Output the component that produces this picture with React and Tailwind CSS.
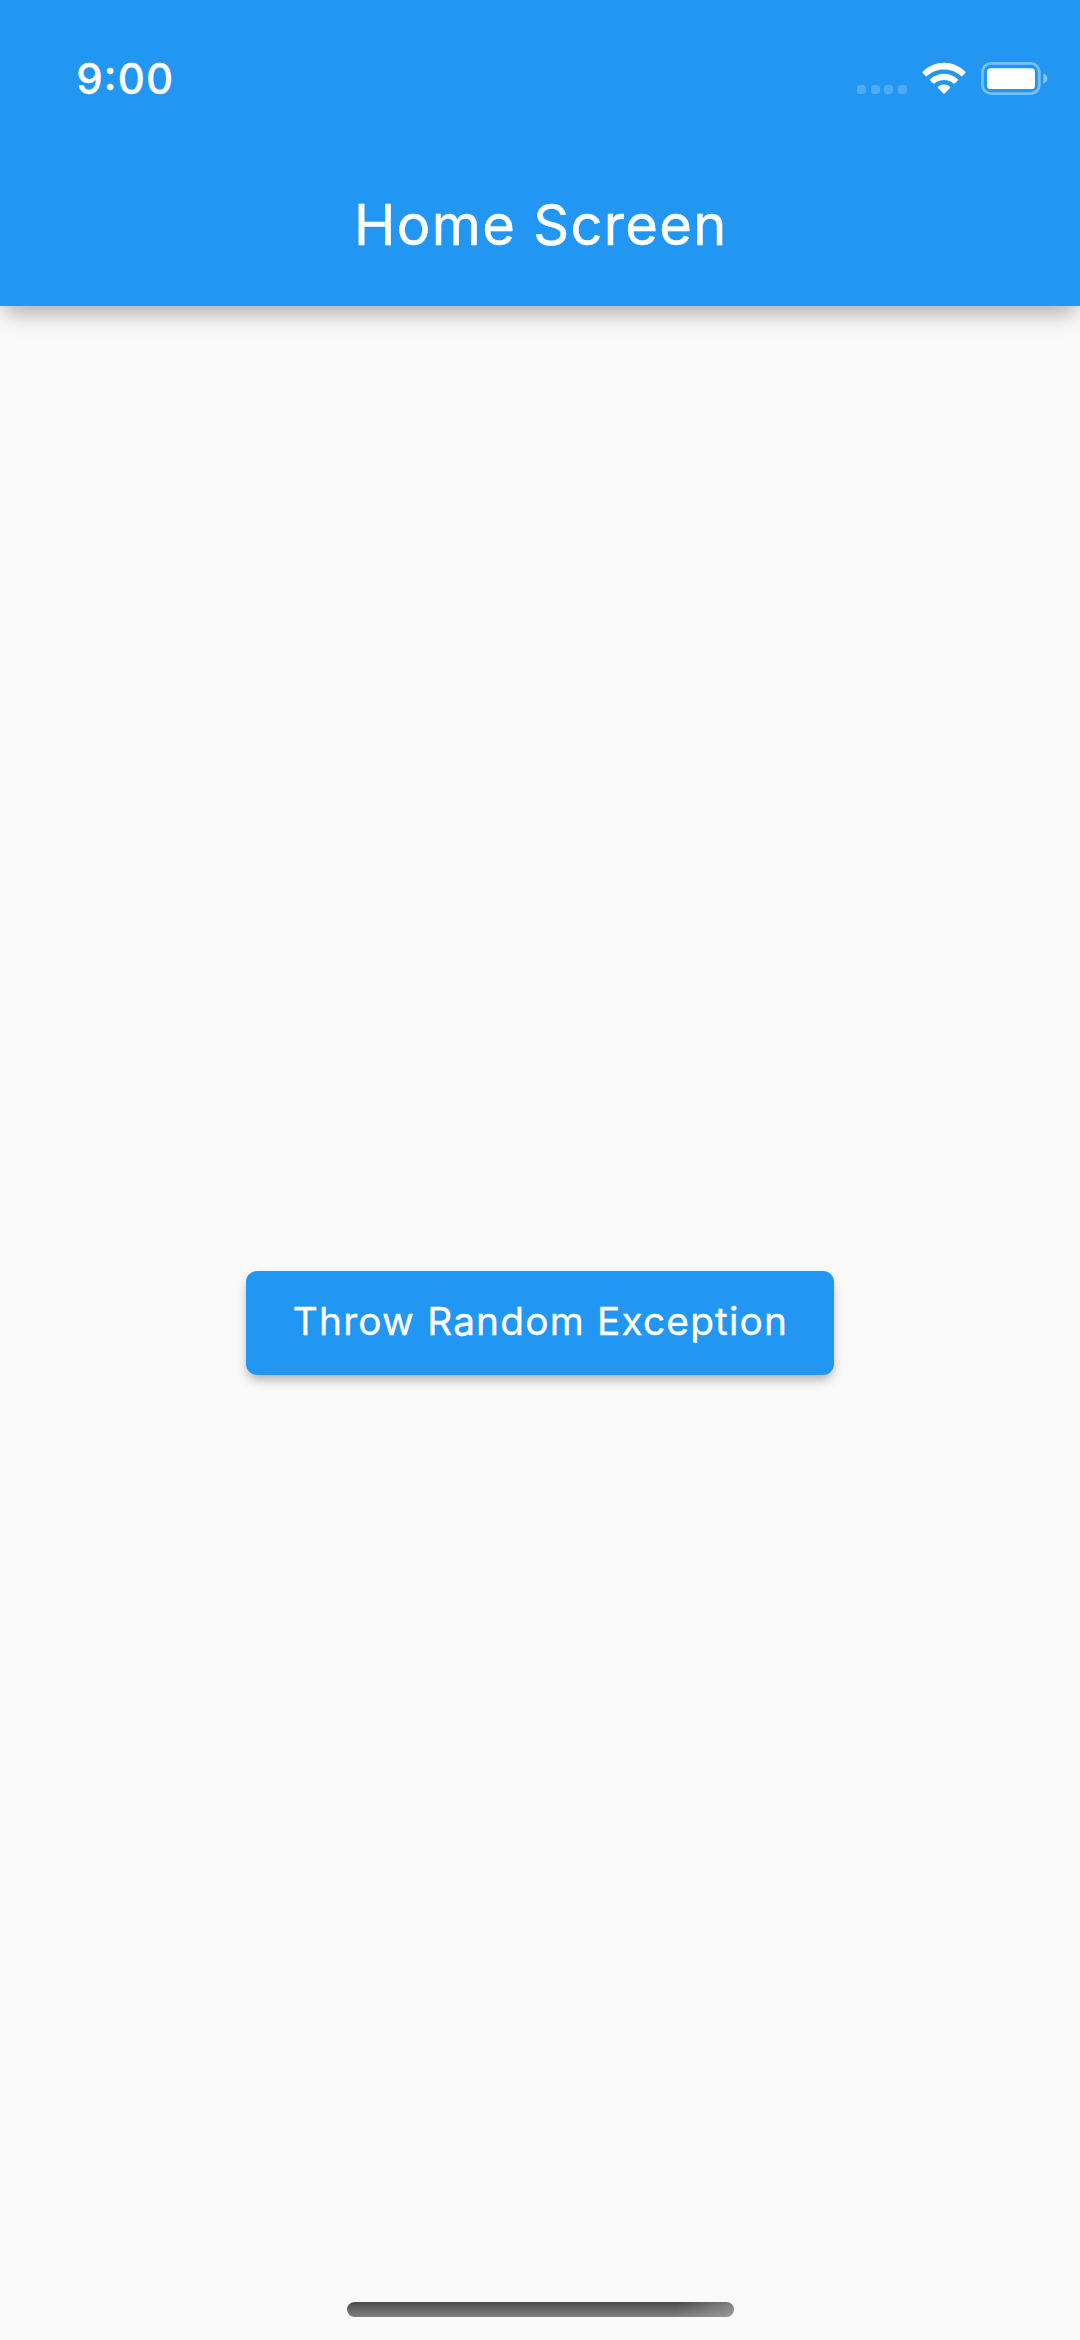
function SignalDots() {
  return (
    <div className="flex gap-[4.6px] pt-[23.5px]">
      {[0, 1, 2, 3].map((i) => (
        <span key={i} className="size-[9px] rounded-[3px] bg-white/20" />
      ))}
    </div>
  );
}

function WifiIcon() {
  return (
    <svg className="h-[34px] w-[44px]" viewBox="0 0 44 34" fill="white">
      <path d="M22 7.4C28.7 7.4 34.8 9.9 39.2 14.1C39.5 14.4 40 14.4 40.3 14.1L43.4 10.9C43.7 10.6 43.7 10.1 43.4 9.8C31.4-2.3 12.6-2.3 .6 9.8C.3 10.1 .3 10.6 .6 10.9L3.7 14.1C4 14.4 4.5 14.4 4.8 14.1C9.2 9.9 15.3 7.4 22 7.4Z" />
      <path d="M22 17.9C25.6 17.9 29 19.2 31.6 21.6C31.9 21.9 32.4 21.9 32.7 21.6L35.8 18.4C36.1 18.1 36.1 17.6 35.8 17.3C28 9.9 16 9.9 8.2 17.3C7.9 17.6 7.9 18.1 8.2 18.4L11.3 21.6C11.6 21.9 12.1 21.9 12.4 21.6C15 19.2 18.4 17.9 22 17.9Z" />
      <path d="M28.1 25.9C28.4 25.6 28.4 25 28.1 24.8C24.6 21.8 19.4 21.8 15.9 24.8C15.6 25 15.6 25.6 15.9 25.9L21.4 31.5C21.7 31.9 22.3 31.9 22.6 31.5Z" />
    </svg>
  );
}

function BatteryIcon() {
  return (
    <svg className="h-[34px] w-[67px]" viewBox="0 0 67 34" fill="none">
      <rect x="1.4" y="1.4" width="56.9" height="30.2" rx="8.6" stroke="white" strokeOpacity="0.4" strokeWidth="2.8" />
      <rect x="6" y="6.2" width="48" height="20.8" rx="3.6" fill="white" />
      <path d="M62.4 11.4V21.8C64.8 21 66.4 18.9 66.4 16.6C66.4 14.3 64.8 12.2 62.4 11.4Z" fill="white" fillOpacity="0.45" />
    </svg>
  );
}

export default function App() {
  return (
    <div className="flex h-[2340px] w-[1080px] flex-col overflow-hidden bg-[#fafafa] font-['Inter',sans-serif] text-white">
      <header className="flex h-[305.5px] shrink-0 flex-col bg-[#2196f3] shadow-[0_10px_22px_-4px_rgba(0,0,0,0.34)]">
        <div className="flex h-[144px] items-start justify-between pt-[61.5px] pr-[32px] pl-[76.3px]">
          <time className="text-[42px] leading-[34px] font-medium tracking-[1.1px] [-webkit-text-stroke:0.3px_white]">
            9<span className="relative -top-[4px]">:</span>00
          </time>
          <div className="flex items-start">
            <SignalDots />
            <div className="ml-[15px]">
              <WifiIcon />
            </div>
            <div className="ml-[15px]">
              <BatteryIcon />
            </div>
          </div>
        </div>
        <div className="flex flex-1 items-center justify-center pl-[1.5px]">
          <h1 className="text-[56px] leading-none tracking-[1.32px] [-webkit-text-stroke:0.5px_white]">Home Screen</h1>
        </div>
      </header>
      <main className="flex flex-1 items-start justify-center pt-[965.5px]">
        <button className="flex h-[103.7px] w-[587.6px] items-center justify-center rounded-[11px] bg-[#2196f3] pb-[2px] pl-[1px] text-[38.8px] leading-none tracking-[1.2px] whitespace-nowrap shadow-[0_6px_12px_-2px_rgba(0,0,0,0.33)] [-webkit-text-stroke:0.35px_white]">
          Throw Random Exception
        </button>
      </main>
      <div className="flex h-[38px] shrink-0 justify-center pl-[1px]">
        <div className="h-[15px] w-[386.5px] rounded-full bg-[linear-gradient(100deg,transparent_85%,rgba(180,180,180,0.5)_100%),linear-gradient(180deg,#4b4b4b,#808080)]" />
      </div>
    </div>
  );
}
